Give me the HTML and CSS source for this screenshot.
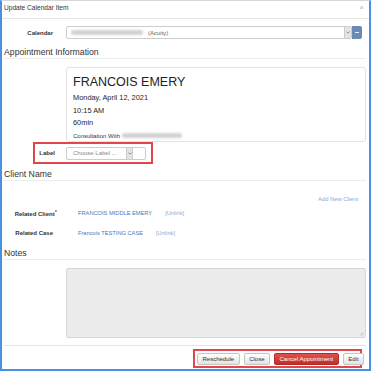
FILE: index.html
```html
<!DOCTYPE html>
<html lang="en">
<head>
  <meta charset="UTF-8" />
  <meta name="viewport" content="width=device-width, initial-scale=1.0" />
  <title>Update Calendar Item</title>
  <link rel="stylesheet" href="styles.css">
</head>
<body>
  <div class="modal">
    <div class="modal-header">
      <span class="modal-title">Update Calendar Item</span>
      <span class="close">×</span>
    </div>

    <div class="modal-body">
      <div class="row calendar-row">
        <label class="row-label">Calendar</label>
        <div class="select select-wide">
          <span class="blur blur-calendar"></span>
          <span class="select-text">(Acuity)</span>
          <span class="select-arrow">
            <svg width="4" height="3" viewBox="0 0 4 3"><path d="M0.5 0.6 L2 2.2 L3.5 0.6" stroke="#777" stroke-width="0.8" fill="none"/></svg>
          </span>
        </div>
        <button class="btn-more"><span class="dash"></span></button>
      </div>

      <h2 class="section-title">Appointment Information</h2>
      <div class="appt-card">
        <div class="appt-name">FRANCOIS EMERY</div>
        <div class="appt-line first">Monday, April 12, 2021</div>
        <div class="appt-line">10:15 AM</div>
        <div class="appt-line">60min</div>
        <div class="appt-small">Consultation With <span class="blur blur-with"></span></div>
      </div>

      <div class="highlight label-row">
        <label class="row-label">Label</label>
        <div class="select select-short">
          <span class="select-text placeholder">Choose Label ...</span>
          <span class="select-arrow">
            <svg width="4" height="3" viewBox="0 0 4 3"><path d="M0.5 0.6 L2 2.2 L3.5 0.6" stroke="#777" stroke-width="0.8" fill="none"/></svg>
          </span>
          <span class="select-rest"></span>
        </div>
      </div>

      <h2 class="section-title client-title">Client Name</h2>
      <div class="add-client"><a href="#">Add New Client</a></div>

      <div class="row related-row">
        <label class="row-label">Related Client<span class="req">*</span></label>
        <a class="link" href="#">FRANCOIS MIDDLE EMERY</a>
        <a class="unlink" href="#">[Unlink]</a>
      </div>
      <div class="row related-row">
        <label class="row-label">Related Case</label>
        <a class="link" href="#">Francois TESTING CASE</a>
        <a class="unlink" href="#">[Unlink]</a>
      </div>

      <h2 class="section-title notes-title">Notes</h2>
      <div class="row notes-row">
        <span class="row-label"></span>
        <div class="notes">
          <svg class="grip" width="5" height="5" viewBox="0 0 5 5"><path d="M4.5 1 L1 4.5 M4.5 3 L3 4.5" stroke="#aaa" stroke-width="0.6"/></svg>
        </div>
      </div>
    </div>

    <div class="modal-footer">
      <div class="highlight actions">
        <button class="btn">Reschedule</button>
        <button class="btn">Close</button>
        <button class="btn btn-danger">Cancel Appointment</button>
        <button class="btn">Edit</button>
      </div>
    </div>
  </div>
</body>
</html>
```

FILE: styles.css
```css
* {
  box-sizing: border-box;
  margin: 0;
  padding: 0;
  font-family: 'Liberation Sans', Arial, sans-serif;
}
body {
  background: #fff;
  color: #333;
}
.modal {
  width: 371px;
  height: 371px;
  border: 2px solid #4a8fe0;
  border-top: 1px solid #d6d6d6;
  background: #fff;
  display: flex;
  flex-direction: column;
}
.modal-header {
  height: 18px;
  border-bottom: 1px solid #e5e5e5;
  padding: 0 5px 0 2px;
  display: flex;
  justify-content: space-between;
  align-items: flex-start;
}
.modal-title {
  font-size: 6.6px;
  line-height: 14px;
  color: #333;
}
.close {
  font-size: 8px;
  line-height: 14px;
  color: #b5b5b5;
}
.modal-body {
  padding: 0 3px 0 2px;
}
.row {
  display: flex;
  align-items: center;
}
.row-label {
  width: 62px;
  flex-shrink: 0;
  padding-right: 13px;
  text-align: right;
  font-size: 6px;
  font-weight: bold;
  color: #333;
}
.calendar-row {
  margin-top: 7px;
  height: 13px;
  padding-right: 4px;
}
.select {
  height: 13px;
  border: 1px solid #ccc;
  border-radius: 2px;
  background: #fff;
  display: flex;
  align-items: center;
}
.select-wide {
  flex: 1;
  padding-left: 4px;
}
.select-text {
  font-size: 6px;
  color: #666;
  white-space: nowrap;
}
.select-text.placeholder {
  flex: 1;
  color: #888;
  padding-left: 6px;
}
.select-arrow {
  width: 7px;
  height: 100%;
  background: #e4e4e4;
  border-left: 1px solid #ccc;
  display: flex;
  align-items: center;
  justify-content: center;
}
.select-wide .select-arrow {
  margin-left: auto;
}
.select-short {
  width: 80px;
}
.select-short .select-arrow {
  border-right: 1px solid #ccc;
}
.select-rest {
  width: 12px;
}
.blur {
  display: inline-block;
  height: 5px;
  background: #d2d2d2;
  filter: blur(1px);
  border-radius: 2px;
}
.blur-calendar {
  width: 72px;
  margin-right: 5px;
}
.blur-with {
  width: 60px;
  vertical-align: middle;
}
.btn-more {
  width: 10px;
  height: 13px;
  border: none;
  background: #6a8cb4;
  border-radius: 0 2px 2px 0;
  display: flex;
  align-items: center;
  justify-content: center;
}
.dash {
  width: 4px;
  height: 1px;
  background: #e8eef5;
}
.section-title {
  margin-top: 8px;
  font-size: 8.7px;
  font-weight: normal;
  line-height: 10px;
  padding-bottom: 1px;
  border-bottom: 1px solid #ececec;
  color: #333;
}
.appt-card {
  margin: 8px 0 0 62px;
  height: 75px;
  border: 1px solid #e2e2e2;
  border-radius: 3px;
  padding: 7px 0 0 6px;
}
.appt-name {
  font-size: 12.5px;
  line-height: 15px;
  color: #222;
}
.appt-line {
  font-size: 7.4px;
  line-height: 12.5px;
  color: #262626;
}
.appt-line.first {
  margin-top: 2px;
}
.appt-small {
  font-size: 6px;
  line-height: 12px;
  color: #333;
}
.highlight {
  border: 2px solid #e0474c;
}
.label-row {
  margin-left: 29px;
  width: 120px;
  height: 22px;
  display: flex;
  align-items: center;
}
.label-row .row-label {
  width: 31px;
  padding-right: 11px;
}
.client-title {
  margin-top: 5px;
}
.add-client {
  margin-top: 11px;
  text-align: right;
  padding-right: 8px;
  line-height: 8px;
}
.add-client a {
  font-size: 5.8px;
  color: #86a9d6;
  text-decoration: none;
}
.related-row {
  height: 20px;
}
.related-row:first-of-type {
  margin-top: 1px;
}
.req {
  color: #d9302c;
  font-size: 6px;
  vertical-align: 2px;
  margin-right: -4px;
}
.link {
  margin-left: 12px;
  font-size: 5.7px;
  color: #3f7cc2;
  text-decoration: none;
}
.unlink {
  margin-left: 13px;
  font-size: 5.7px;
  color: #8aaad6;
  text-decoration: none;
}
.notes-title {
  margin-top: 5px;
}
.notes-row {
  margin-top: 8px;
}
.notes {
  position: relative;
  flex: 1;
  height: 70px;
  background: #ececec;
  border: 1px solid #d6d6d6;
  border-radius: 2px;
}
.grip {
  position: absolute;
  right: 1px;
  bottom: 1px;
}
.modal-footer {
  margin: 7px 3px 0 2px;
  border-top: 1px solid #e5e5e5;
}
.actions {
  margin: 3px 4px 0 auto;
  width: 169px;
  height: 19px;
  padding-left: 2px;
  display: flex;
  align-items: center;
  gap: 4px;
}
.btn {
  height: 12px;
  padding: 0 4.5px;
  font-size: 6px;
  white-space: nowrap;
  color: #333;
  border: 1px solid #c6c6c6;
  border-radius: 2px;
  background: linear-gradient(#ffffff, #e3e3e3);
}
.btn-danger {
  color: #fff;
  border-color: #b52b27;
  background: linear-gradient(#d9534f, #c12e2a);
}
```
